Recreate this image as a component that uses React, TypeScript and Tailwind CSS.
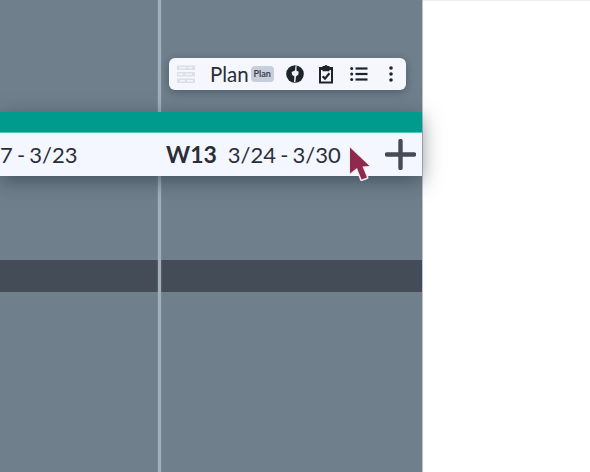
import React from 'react';

const font = { fontFamily: 'Lato, sans-serif' };

const ChartIcon = () => (
  <svg width="18" height="19" viewBox="0 0 18 19" className="shrink-0">
    <rect x="0" y="0.5" width="18" height="4.5" fill="#dcdfe5" />
    <rect x="0" y="7" width="18" height="4.5" fill="#dcdfe5" />
    <rect x="0" y="13.5" width="18" height="4.5" fill="#dcdfe5" />
    <rect x="2" y="2" width="7" height="1.5" fill="#f2f4f8" />
    <rect x="11" y="2" width="4" height="1.5" fill="#f2f4f8" />
    <rect x="1" y="8.5" width="5" height="1.5" fill="#f2f4f8" />
    <rect x="8" y="8.5" width="7" height="1.5" fill="#f2f4f8" />
    <rect x="3" y="15" width="5" height="1.5" fill="#f2f4f8" />
    <rect x="10" y="15" width="6" height="1.5" fill="#f2f4f8" />
  </svg>
);

const PieIcon = () => (
  <svg width="18" height="18" viewBox="0 0 18 18" className="shrink-0">
    <circle cx="9" cy="9" r="8.8" fill="#1f232b" />
    <path d="M9.6 0.5 L9 5.6 L5.6 7 L6.2 10 L8.4 11.6 L8 17 L9.4 17 L10 11.6 L12.4 9.6 L12.6 6.8 L10.4 5.4 L10.6 0.5 Z" fill="#eef1f7" />
  </svg>
);

const ClipboardIcon = () => (
  <svg width="14" height="20" viewBox="0 0 14 20" className="shrink-0">
    <path d="M0 3h3.5V2h2a1.7 1.7 0 0 1 3 0h2v1H14V19.5H0Z" fill="#1f232b" />
    <path d="M2 6h1.5V7.2h7V6H12v11.5H2Z" fill="#f5f7fd" />
    <path d="M3.6 12.2l2.4 2.4 4.4-5.4" fill="none" stroke="#1f232b" strokeWidth="2.2" />
  </svg>
);

const ListIcon = () => (
  <svg width="18" height="16" viewBox="0 0 18 16" className="shrink-0" fill="#1f232b">
    <circle cx="1.7" cy="2.5" r="1.5" />
    <circle cx="1.7" cy="8" r="1.5" />
    <circle cx="1.7" cy="13.5" r="1.5" />
    <rect x="5.5" y="1.4" width="12" height="2.2" />
    <rect x="5.5" y="6.9" width="12" height="2.2" />
    <rect x="5.5" y="12.4" width="12" height="2.2" />
  </svg>
);

const DotsIcon = () => (
  <svg width="6" height="16" viewBox="0 0 6 16" className="shrink-0" fill="#1f232b">
    <circle cx="3" cy="2" r="1.8" />
    <circle cx="3" cy="8" r="1.8" />
    <circle cx="3" cy="14" r="1.8" />
  </svg>
);

const PlusIcon = () => (
  <svg width="31" height="31" viewBox="0 0 31 31" className="shrink-0" fill="none" stroke="#444c57" strokeWidth="4.4" strokeLinecap="round">
    <path d="M15.5 2v27M2 15.5h27" />
  </svg>
);

const Cursor = () => (
  <svg width="28" height="40" viewBox="0 0 28 40">
    <path
      d="M4 2.5 L4 28.5 L11 23 L15.5 34.5 L21 32.5 L16.5 21.5 L23.5 21 Z"
      fill="#8f2a4f"
      stroke="#f4f0f2"
      strokeWidth="3"
      strokeLinejoin="round"
      paintOrder="stroke"
    />
  </svg>
);

const App: React.FC = () => {
  return (
    <div className="h-[472px] w-[590px] overflow-hidden bg-white shadow-[inset_0_1px_0_#eeeeee]" style={font}>
      <div className="relative flex h-full w-[423px] flex-col border-r border-[#b9c4d0] bg-[#6f7f8c]">
        {/* Week line */}
        <div className="absolute inset-y-0 left-[158px] w-[3px] bg-[#a2afbb] shadow-[0_0_2px_rgba(162,175,187,0.7)]" />

        <div className="h-[112px] shrink-0" />

        {/* Week header */}
        <div className="relative z-10 shadow-[0_5px_18px_rgba(30,40,50,0.5)]">
          <div className="h-[21px] border-b border-[#4cc9b8] bg-[#009b8c]" />
          <div className="flex h-[43px] items-center overflow-hidden bg-[#f4f7ff] text-[#2a2e38]">
            <span className="w-[166px] shrink-0 whitespace-nowrap text-[22px] [word-spacing:-1.5px]">7 - 3/23</span>
            <span className="shrink-0 text-[23px] font-bold">W13</span>
            <span className="ml-[11px] shrink-0 whitespace-nowrap text-[22px] [word-spacing:-1.5px]">3/24 - 3/30</span>
            <span className="ml-auto mr-[6px] flex"><PlusIcon /></span>
          </div>
        </div>

        <div className="h-[84px] shrink-0" />

        {/* Dark band */}
        <div className="h-[32px] shrink-0 bg-[#434c57]" />
        <div className="flex-1" />

        {/* Toolbar */}
        <div className="absolute left-[169px] top-[58px] z-20 flex h-[32px] w-[237px] items-center rounded-md bg-[#f5f7fd] pl-[8px] shadow-[0_2px_8px_rgba(30,40,50,0.4)]">
          <ChartIcon />
          <span className="ml-[15px] text-[20.5px] leading-none text-[#2a2e38]">Plan</span>
          <span className="ml-[2px] flex h-[16px] w-[23px] items-center justify-center rounded-[4px] bg-[#c8cedb] text-[9px] font-bold text-[#3e4450]">
            Plan
          </span>
          <span className="ml-[12px] flex"><PieIcon /></span>
          <span className="ml-[15px] flex"><ClipboardIcon /></span>
          <span className="ml-[17px] flex"><ListIcon /></span>
          <span className="ml-[20px] flex"><DotsIcon /></span>
        </div>

        {/* Mouse pointer */}
        <div className="absolute left-[346px] top-[145px] z-30">
          <Cursor />
        </div>
      </div>
    </div>
  );
};

export default App;
